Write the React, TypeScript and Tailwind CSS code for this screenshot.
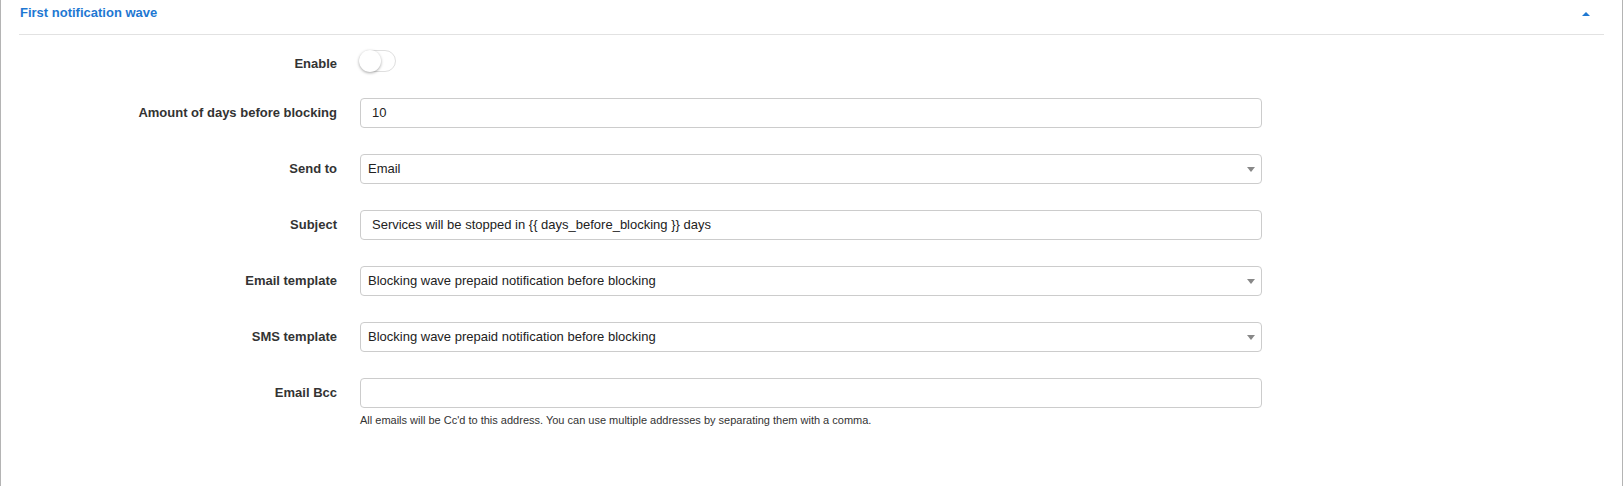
import React from "react";

const rows: { label: string; value: string; kind: "input" | "select" }[] = [
  { label: "Amount of days before blocking", value: "10", kind: "input" },
  { label: "Send to", value: "Email", kind: "select" },
  { label: "Subject", value: "Services will be stopped in {{ days_before_blocking }} days", kind: "input" },
  { label: "Email template", value: "Blocking wave prepaid notification before blocking", kind: "select" },
  { label: "SMS template", value: "Blocking wave prepaid notification before blocking", kind: "select" },
];

function Field({ value, kind }: { value: string; kind: "input" | "select" }) {
  if (kind === "select") {
    return (
      <div className="w-[902px] h-[30px] border border-[#cccccc] rounded-[4px] bg-white flex items-center justify-between pl-[7px] pr-[6px] text-[13px] text-[#222]">
        <span>{value}</span>
        <span className="w-0 h-0 border-l-[4px] border-r-[4px] border-t-[5px] border-l-transparent border-r-transparent border-t-[#888888]" />
      </div>
    );
  }
  return (
    <div className="w-[902px] h-[30px] border border-[#cccccc] rounded-[4px] bg-white flex items-center px-[11px] text-[13px] text-[#222]">
      {value}
    </div>
  );
}

export default function App() {
  return (
    <div
      className="w-[1623px] h-[486px] bg-white border-l border-r border-[#b4b4b4] overflow-hidden"
      style={{ fontFamily: '"Liberation Sans", Arial, sans-serif' }}
    >
      <div className="ml-[18px] mr-[18px] h-[35px] border-b border-[#e2e2e2] flex justify-between">
        <div className="pt-[6px] pl-[1px] leading-[14px] text-[13px] font-bold text-[#1e78d2]">
          First notification wave
        </div>
        <span className="mt-[12px] mr-[14px] w-0 h-0 border-l-[4px] border-r-[4px] border-b-[4px] border-l-transparent border-r-transparent border-b-[#1e78d2]" />
      </div>

      <div className="pt-[15px] flex flex-col gap-[26px]">
        <div className="flex items-start h-[22px]">
          <div className="w-[336px] pt-[6px] leading-[16px] text-right text-[13px] font-bold text-[#333]">Enable</div>
          <div className="ml-[22px] relative w-[37px] h-[22px] rounded-full border border-[#dfdfdf] bg-white">
            <span className="absolute left-[-1px] top-[-1px] w-[22px] h-[22px] rounded-full bg-white shadow-[0_1px_3px_rgba(0,0,0,0.35)]" />
          </div>
        </div>

        {rows.map((r) => (
          <div key={r.label} className="flex items-center h-[30px]">
            <div className="w-[336px] text-right text-[13px] font-bold text-[#333]">{r.label}</div>
            <div className="ml-[23px]">
              <Field value={r.value} kind={r.kind} />
            </div>
          </div>
        ))}

        <div className="flex items-start">
          <div className="w-[336px] h-[30px] flex items-center justify-end text-[13px] font-bold text-[#333]">
            Email Bcc
          </div>
          <div className="ml-[23px] flex flex-col">
            <div className="w-[902px] h-[30px] border border-[#cccccc] rounded-[4px] bg-white" />
            <div className="mt-[5px] leading-[15px] text-[11px] text-[#333]">
              All emails will be Cc'd to this address. You can use multiple addresses by separating them with a comma.
            </div>
          </div>
        </div>
      </div>
    </div>
  );
}
